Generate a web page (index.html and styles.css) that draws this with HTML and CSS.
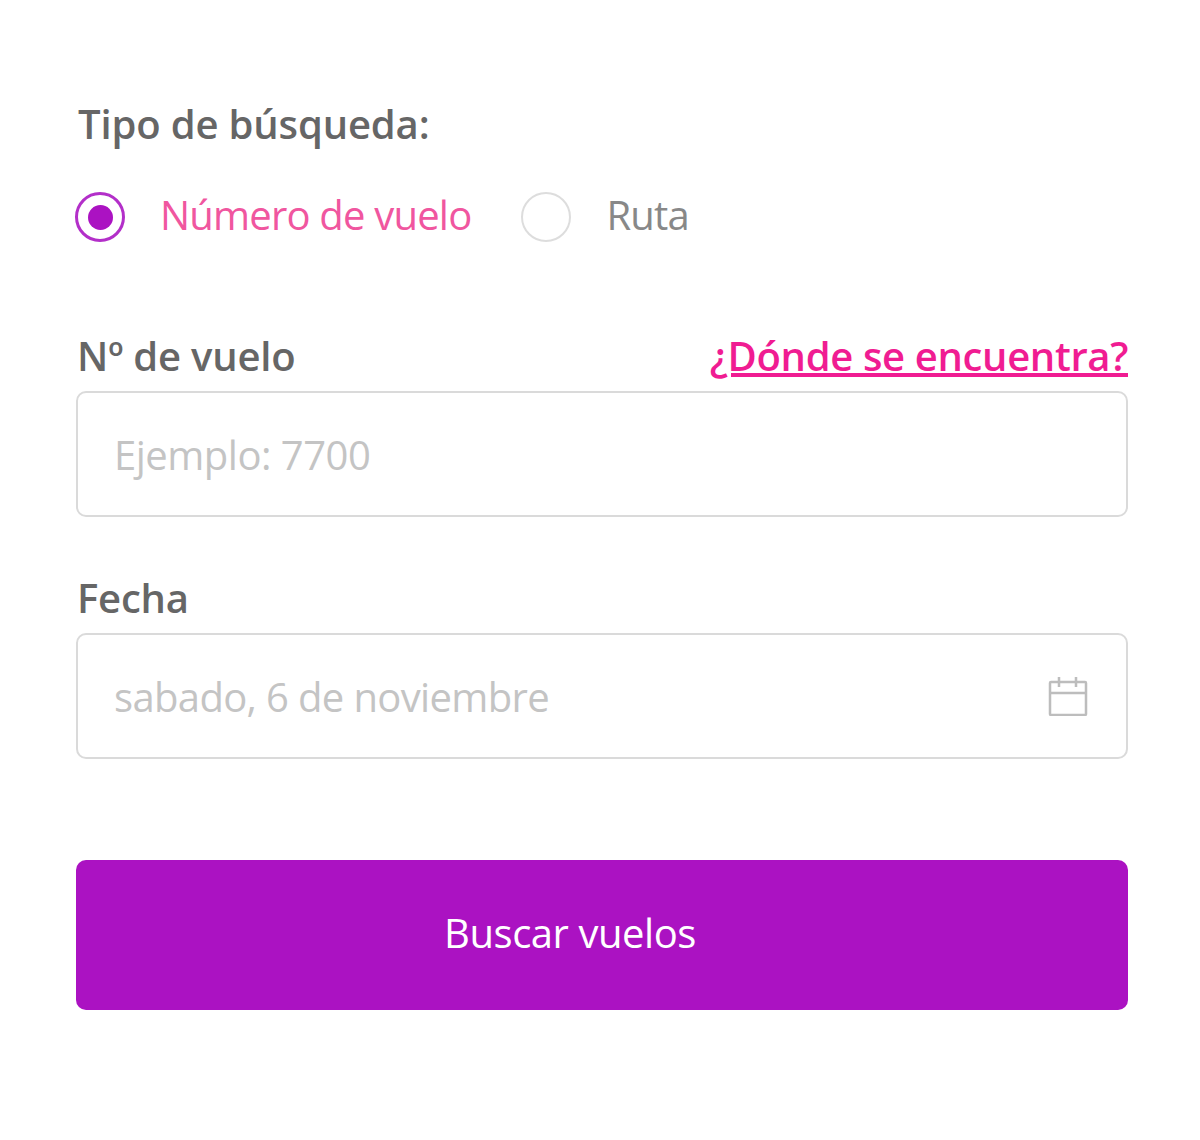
FILE: index.html
```html
<!DOCTYPE html>
<html lang="es">
<head>
  <meta charset="UTF-8">
  <title>Buscar vuelos</title>
  <link rel="stylesheet" href="styles.css">
</head>
<body>

<form class="search-form">
  <p class="form-title">Tipo de búsqueda:</p>

  <div class="radio-row">
    <label class="radio-item active">
      <span class="radio-mark"><span class="radio-dot"></span></span>
      <span class="radio-text">Número de vuelo</span>
    </label>
    <label class="radio-item">
      <span class="radio-mark"></span>
      <span class="radio-text">Ruta</span>
    </label>
  </div>

  <div class="field flight-field">
    <div class="field-head">
      <span class="field-label">Nº de vuelo</span>
      <a class="help-link" href="#">¿Dónde se encuentra?</a>
    </div>
    <div class="input-box">
      <span class="placeholder">Ejemplo: 7700</span>
    </div>
  </div>

  <div class="field date-field">
    <div class="field-head">
      <span class="field-label">Fecha</span>
    </div>
    <div class="input-box">
      <span class="placeholder date-text">sabado, 6 de noviembre</span>
      <svg class="calendar-icon" width="40" height="40" viewBox="0 0 40 40" fill="none" stroke="#bdbdbd" stroke-width="2.5">
        <rect x="2" y="6" width="36" height="33" rx="1"/>
        <path d="M2 17h36M11 1v10M28 1v10"/>
      </svg>
    </div>
  </div>

  <button type="button" class="search-btn">Buscar vuelos</button>
</form>

</body>
</html>
```

FILE: styles.css
```css
body {
  margin: 0;
  background-color: #fff;
  font-family: "Source Sans Pro", "Open Sans", "Noto Sans", sans-serif;
}

.search-form {
  padding: 100px 72px 0 76px;
}

.form-title {
  margin: 0 0 0 2px;
  font-size: 40px;
  line-height: 48px;
  font-weight: 600;
  letter-spacing: -0.15px;
  color: #666;
}

.radio-row {
  display: flex;
  align-items: center;
  margin: 41px 0 0 -1px;
}

.radio-item {
  display: flex;
  align-items: center;
  gap: 35px;
  margin-right: 50px;
  font-size: 40px;
  line-height: 52px;
  letter-spacing: -0.8px;
  color: #888;
}

.radio-item.active {
  color: #f0569f;
}

.radio-text {
  padding-bottom: 4px;
}

.radio-mark {
  display: flex;
  align-items: center;
  justify-content: center;
  box-sizing: border-box;
  width: 50px;
  height: 50px;
  border: 2px solid #ddd;
  border-radius: 50%;
}

.active .radio-mark {
  border: 3px solid #b32fc9;
}

.radio-dot {
  width: 25px;
  height: 25px;
  border-radius: 50%;
  background-color: #ab12c2;
}

.flight-field {
  margin-top: 86px;
}

.date-field {
  margin-top: 56px;
}

.field-head {
  display: flex;
  justify-content: space-between;
  align-items: center;
  height: 48px;
  margin-bottom: 12px;
}

.field-label {
  margin-left: 1px;
  font-size: 40px;
  font-weight: 600;
  letter-spacing: -0.2px;
  color: #666;
}

.help-link {
  font-size: 40px;
  font-weight: 600;
  letter-spacing: -0.35px;
  color: #f01c92;
}

.input-box {
  display: flex;
  align-items: center;
  justify-content: space-between;
  box-sizing: border-box;
  height: 126px;
  padding: 0 38px 0 36px;
  border: 2px solid #dadada;
  border-radius: 10px;
}

.placeholder {
  font-size: 40px;
  letter-spacing: -0.5px;
  color: #c4c4c4;
}

.date-text {
  letter-spacing: -0.65px;
}

.search-btn {
  display: block;
  width: 100%;
  height: 150px;
  margin-top: 101px;
  padding: 0 64px 6px 0;
  border: none;
  border-radius: 10px;
  background-color: #ab12c2;
  color: #fff;
  font-family: inherit;
  font-size: 40px;
  letter-spacing: -0.45px;
}
```
